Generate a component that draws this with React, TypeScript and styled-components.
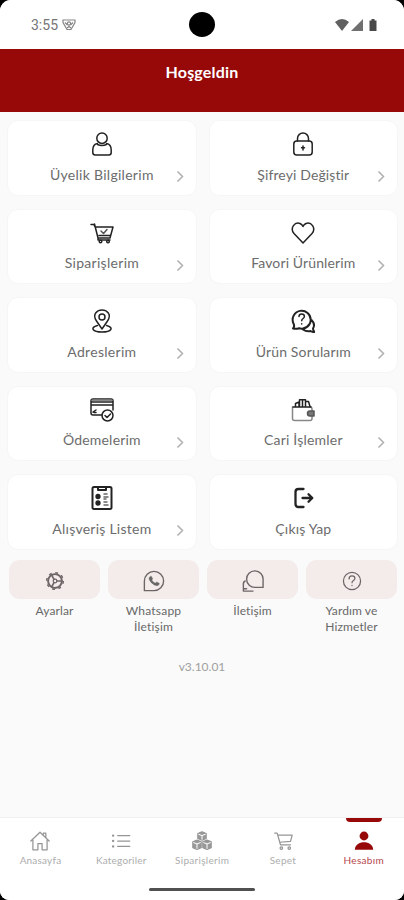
import React from "react";
import styled, { createGlobalStyle } from "styled-components";

const Global = createGlobalStyle`
  * { box-sizing: border-box; }
  body { margin: 0; background: #000; font-family: Lato, "Noto Sans", sans-serif; }
`;

const Screen = styled.div`
  width: 404px;
  height: 900px;
  display: flex;
  flex-direction: column;
  background: #fafafa;
  border-radius: 11px 11px 9px 9px;
  overflow: hidden;
`;

const StatusBar = styled.div`
  height: 49px;
  flex: none;
  display: grid;
  grid-template-columns: 1fr 26px 1fr;
  align-items: center;
  background: #fff;
  color: #757575;
`;
const StatusLeft = styled.div`
  display: flex;
  align-items: center;
  gap: 4px;
  padding-left: 31px;
  font: 14px Roboto, sans-serif;
`;
const Camera = styled.div`
  width: 26px;
  height: 25px;
  border-radius: 50%;
  background: #000;
`;
const StatusRight = styled.div`
  display: flex;
  align-items: center;
  justify-content: flex-end;
  gap: 2px;
  padding-right: 26px;
`;

const Header = styled.header`
  height: 63px;
  flex: none;
  background: #970809;
  color: #fff;
  display: flex;
  justify-content: center;
  padding-top: 13px;
  font-size: 16px;
  line-height: 20px;
  font-weight: 700;
  letter-spacing: 0.2px;
`;

const Cards = styled.main`
  display: grid;
  grid-template-columns: 1fr 1fr;
  gap: 13px 12px;
  padding: 8px 6px 0 7px;
`;
const Card = styled.button`
  position: relative;
  height: 75.5px;
  border: 1px solid #f6f6f6;
  border-radius: 11px;
  background: #fff;
  padding: 11px 0 0;
  display: flex;
  flex-direction: column;
  align-items: center;
  font-family: inherit;
  color: #6c6c6c;
`;
const CardLabel = styled.span<{ $tracking: number }>`
  margin-top: 8.5px;
  font-size: 14px;
  line-height: 20px;
  letter-spacing: ${(p) => p.$tracking}px;
  margin-right: ${(p) => -p.$tracking}px;
  white-space: nowrap;
`;
const Chevron = styled.svg`
  position: absolute;
  right: 12px;
  top: 49px;
`;

const Shortcuts = styled.nav`
  display: grid;
  grid-template-columns: repeat(4, 1fr);
  gap: 8px;
  padding: 10px 7px 0 9px;
`;
const Shortcut = styled.div`
  display: flex;
  flex-direction: column;
  align-items: center;
  gap: 4px;
`;
const ShortcutTile = styled.div`
  width: 100%;
  height: 39px;
  padding-top: 4px;
  border-radius: 11px;
  background: #f4ebeb;
  display: flex;
  align-items: center;
  justify-content: center;
`;
const ShortcutLabel = styled.span<{ $tracking: number }>`
  font-size: 12px;
  line-height: 16px;
  letter-spacing: ${(p) => p.$tracking}px;
  color: #686868;
  text-align: center;
  white-space: pre-line;
`;

const Version = styled.div`
  margin-top: 24px;
  text-align: center;
  font-size: 12px;
  line-height: 16px;
  color: #a0a0a0;
`;

const BottomBar = styled.footer`
  margin-top: auto;
  height: 83px;
  background: #fff;
  border-top: 1px solid #f0f0f0;
  display: flex;
  flex-direction: column;
  align-items: center;
`;
const Tabs = styled.nav`
  width: 100%;
  height: 69px;
  display: grid;
  grid-template-columns: repeat(5, 1fr);
`;
const Tab = styled.div`
  display: flex;
  flex-direction: column;
  align-items: center;
`;
const TabMark = styled.div<{ $active?: boolean }>`
  width: 36px;
  height: 4px;
  margin-bottom: 9px;
  border-radius: 0 0 4px 4px;
  background: ${(p) => (p.$active ? "#970809" : "transparent")};
`;
const TabLabel = styled.span<{ $tracking: number; $active?: boolean }>`
  margin-top: 2px;
  font-size: 10px;
  line-height: 14px;
  letter-spacing: ${(p) => p.$tracking}px;
  margin-right: ${(p) => -p.$tracking}px;
  color: ${(p) => (p.$active ? "#b5484c" : "#adadad")};
`;
const HomeIndicator = styled.div`
  width: 106px;
  height: 3px;
  border-radius: 2px;
  margin-top: 1px;
  background: #505050;
`;

const Icon = styled.svg<{ $color?: string }>`
  display: block;
  flex: none;
  fill: none;
  stroke: ${(p) => p.$color ?? "#222"};
  stroke-width: 1.5;
  stroke-linecap: round;
  stroke-linejoin: round;
`;

const drawings: Record<string, React.ReactNode> = {
  person: (
    <>
      <circle cx="12" cy="6.2" r="5.2" />
      <path d="M7.500 11.500C4 12 2.800 14 2.800 18v2.500q0 2.500 2.500 2.500h13.400q2.500 0 2.500-2.500V18c0-4-1.200-6-4.700-6.500M7.500 12.500q4.500 2 9 0" />
    </>
  ),
  lock: (
    <>
      <rect x="2.800" y="9" width="18.400" height="14" rx="3" />
      <path d="M6.500 9V6.500a5.500 5.500 0 0 1 11 0V9M12 14v4M10.500 15.800h3" />
    </>
  ),
  order: (
    <>
      <path d="M1 3.500h3l1 2.500h18l-3 11H8L4.500 3M8 17v2h12M9 14.500h11" />
      <path d="m11 10 2.500 2.500L17 8.500" stroke="#555" />
      <circle cx="10.500" cy="20.500" r="1.300" />
      <circle cx="18" cy="20.500" r="1.300" />
    </>
  ),
  heart: <path d="M12 22 3 12.500C-1.500 7 4 .5 9 2.500q2 .8 3 3 1-2.200 3-3c5-2 10.500 4.500 6 10z" />,
  pin: (
    <>
      <path d="M12 20 6.500 12C1.500 4.500 8 1 12 1s10.500 3.500 5.500 11z" />
      <circle cx="12" cy="8" r="3" />
      <path d="M7.500 16.500c-8 2-5 6.500 4.500 6.500s12.500-4.500 4.500-6.500" />
    </>
  ),
  question: (
    <>
      <path strokeWidth="2" d="M2 19.500c1.500-1.500 1.500-3 .5-5a9 9 0 1 1 5.500 4.800q-3 1-6 .2zM20.500 11c3 3 3 6 1.500 8.500q0 2 1.500 3.500-2 .3-4-1-4 1-7.500-1.500M18.500 15c-1.500 2.500-3.500 4-6.500 4.500" />
      <path d="M8 7.500q0-2.500 2.700-2.500t2.700 2.500c0 2-2.700 2-2.700 4.200M10.700 14.700v.2" />
    </>
  ),
  payment: (
    <>
      <path d="M12 17H3q-2 0-2-2V3q0-2 2-2h18q2 0 2 2v9M1 4h22M1 7h22" />
      <path stroke="#888" d="M2 2.300h20" />
      <path d="m3 14 3-2M4 14.500h2" />
      <circle cx="17.500" cy="17.500" r="5.500" />
      <path d="m15 17.500 2 2 3.500-3.500" />
    </>
  ),
  wallet: (
    <>
      <path stroke="#888" d="M1.500 9v11.500q0 2 2 2H19q2 0 2-2V18M19 9q2 0 2 2v2" />
      <path d="M2 9h18M4.500 9V5.500L8 4v5M8.500 8V1.800h6V8M15 3.500h2.500L19 8.500M11.500 2v6" />
      <path stroke="#555" fill="#777" d="M23 13h-4q-2.500 0-2.500 2.500T19 18h4z" />
    </>
  ),
  checklist: (
    <>
      <rect x="2.500" y="1" width="19" height="22" rx="1.500" strokeWidth="2" />
      <path d="M8 1v3h8V1" strokeWidth="2" />
      <circle cx="8" cy="10.500" r="1.900" fill="#222" />
      <circle cx="8" cy="17" r="1.900" fill="#222" />
      <path stroke="#666" d="M14 8h3M14 11h4M14 13h2M14 16h3M14 19h4" />
    </>
  ),
  logout: <path strokeWidth="2.300" d="M12.500 3H7.500q-3 0-3 3v12q0 3 3 3h5M11.500 12H21M17.500 8.200l3.800 3.800-3.800 3.800" />,
  gear: (
    <>
      <circle cx="12" cy="12" r="8.300" strokeWidth="2.300" />
      <circle cx="12" cy="12" r="10" strokeWidth="1.700" strokeDasharray="3.400 4.454" strokeLinecap="butt" />
      <circle cx="12" cy="12" r="2.200" />
      <path strokeWidth="2" d="M14.500 12H20M10.800 10 8 5M10.800 14 8 19" />
    </>
  ),
  whatsapp: (
    <>
      <path d="M1.500 22.500V12A10.500 10.500 0 1 1 12 22.500z" />
      <path fill="#666" strokeWidth=".5" d="M8 7 6.800 8.300q-1 2 2 5.200t6.500 3.700q1.700 0 2.400-1.800v-.9l-2.800-1.400-1.600 1.300q-2.300-1-3.700-3.400L10.500 9.600 9.200 7z" />
    </>
  ),
  chat: (
    <>
      <path d="M23 19h-8.500A9 9 0 1 1 23 10.500z" />
      <path d="M3.500 12Q1 13 1.500 16.500V23H12M5 20.500H2" />
    </>
  ),
  help: (
    <>
      <circle cx="12" cy="12" r="10.300" />
      <path d="M8.500 9.500c0-5 7-4.500 7-.5 0 2.500-3.500 2.500-3.500 5M12 17.300v.2" />
    </>
  ),
  home: (
    <path d="m1 12 11-10.500L23 12M16 4V2.500h3V8M3.500 11v11.500h6V15h5v7.500h6V11" />
  ),
  list: (
    <>
      <path d="M8 5.500h14.500M8 12h14.500M8 18.500h14.500" />
      <path strokeWidth="2.800" d="M2.500 5.500h.1M2.500 12h.1M2.500 18.500h.1" />
    </>
  ),
  boxes: (
    <>
      <path fill="#999" d="m7 3 5-2 5 2v6l-5 2-5-2zM1 13l5-2 5 2v7l-5 2-5-2zM13 13l5-2 5 2v7l-5 2-5-2z" />
      <path stroke="#fff" strokeWidth="1.200" d="m8 4 4 1.500L16 4M12 6v4M2 14l4 1.500 4-1.500M6 16v5M14 14l4 1.500 4-1.500M18 16v5" />
    </>
  ),
  cart: (
    <>
      <path d="M2 2.500h3l4 14h12M6 5h17l-2 7.500-13 1" />
      <circle cx="10" cy="20.500" r="1.500" />
      <circle cx="19.500" cy="20.500" r="1.500" />
    </>
  ),
  account: (
    <>
      <circle cx="12" cy="6" r="5.300" fill="#970809" stroke="none" />
      <path fill="#970809" stroke="none" d="M1 22.500c0-12 22-12 22 0z" />
    </>
  ),
};

function Glyph({ name, size = 24, color }: { name: string; size?: number; color?: string }) {
  return (
    <Icon width={size} height={size} viewBox="0 0 24 24" $color={color}>
      {drawings[name]}
    </Icon>
  );
}

const cards = [
  { icon: "person", label: "Üyelik Bilgilerim", tracking: 0.28 },
  { icon: "lock", label: "Şifreyi Değiştir", tracking: 0.12 },
  { icon: "order", label: "Siparişlerim", tracking: 0.3 },
  { icon: "heart", label: "Favori Ürünlerim", tracking: 0.12 },
  { icon: "pin", label: "Adreslerim", tracking: 0.3 },
  { icon: "question", label: "Ürün Sorularım", tracking: 0.16 },
  { icon: "payment", label: "Ödemelerim", tracking: 0.2 },
  { icon: "wallet", label: "Cari İşlemler", tracking: 0.2 },
  { icon: "checklist", label: "Alışveriş Listem", tracking: 0.25 },
  { icon: "logout", label: "Çıkış Yap", tracking: 0.2, last: true },
];

const shortcuts = [
  { icon: "gear", label: "Ayarlar", size: 20, tracking: 0.1 },
  { icon: "whatsapp", label: "Whatsapp\nİletişim", size: 22, tracking: 0.2 },
  { icon: "chat", label: "İletişim", size: 22, tracking: 0.1 },
  { icon: "help", label: "Yardım ve\nHizmetler", size: 20, tracking: 0.1 },
];

const tabs = [
  { icon: "home", label: "Anasayfa", tracking: 0.2 },
  { icon: "list", label: "Kategoriler", tracking: 0.2 },
  { icon: "boxes", label: "Siparişlerim", tracking: 0.3 },
  { icon: "cart", label: "Sepet", tracking: 0.3 },
  { icon: "account", label: "Hesabım", tracking: 0.3, active: true },
];

export default function App() {
  return (
    <>
      <Global />
      <Screen>
        <StatusBar>
          <StatusLeft>
            3:55
            <svg width="14" height="12" viewBox="0 0 14 12" fill="none" stroke="#858585" strokeWidth="1.200">
              <path d="M1 1h12v2.500L9 10.500H5L1 3.500z" />
              <path d="M3 3.500 5.500 6M11 3.500 8.500 6M5 9l2-1.500L9 9" />
              <circle cx="7" cy="4.500" r="1.600" />
            </svg>
          </StatusLeft>
          <Camera />
          <StatusRight>
            <svg width="14" height="12" viewBox="0 0 14 12" fill="#606060">
              <path d="M0 3q7-6 14 0L7 12z" />
            </svg>
            <svg width="12" height="12" viewBox="0 0 12 12" fill="#707070">
              <path d="M12 0v12H0z" />
            </svg>
            <svg width="13" height="12" viewBox="0 0 13 12" fill="#484848">
              <path d="M4.500 1.500h2V0h3v1.500h2V12h-7z" />
            </svg>
          </StatusRight>
        </StatusBar>
        <Header>Hoşgeldin</Header>
        <Cards>
          {cards.map((c) => (
            <Card key={c.label}>
              <Glyph name={c.icon} />
              <CardLabel $tracking={c.tracking}>{c.label}</CardLabel>
              {!c.last && (
                <Chevron width="8" height="13" viewBox="0 0 8 13" fill="none" stroke="#b0b0b0" strokeWidth="1.500">
                  <path d="m1.500 1.500 5 5-5 5" />
                </Chevron>
              )}
            </Card>
          ))}
        </Cards>
        <Shortcuts>
          {shortcuts.map((s) => (
            <Shortcut key={s.label}>
              <ShortcutTile>
                <Glyph name={s.icon} size={s.size} color="#6c6666" />
              </ShortcutTile>
              <ShortcutLabel $tracking={s.tracking}>{s.label}</ShortcutLabel>
            </Shortcut>
          ))}
        </Shortcuts>
        <Version>v3.10.01</Version>
        <BottomBar>
          <Tabs>
            {tabs.map((t) => (
              <Tab key={t.label}>
                <TabMark $active={t.active} />
                <Glyph name={t.icon} size={20} color="#959595" />
                <TabLabel $tracking={t.tracking} $active={t.active}>{t.label}</TabLabel>
              </Tab>
            ))}
          </Tabs>
          <HomeIndicator />
        </BottomBar>
      </Screen>
    </>
  );
}
